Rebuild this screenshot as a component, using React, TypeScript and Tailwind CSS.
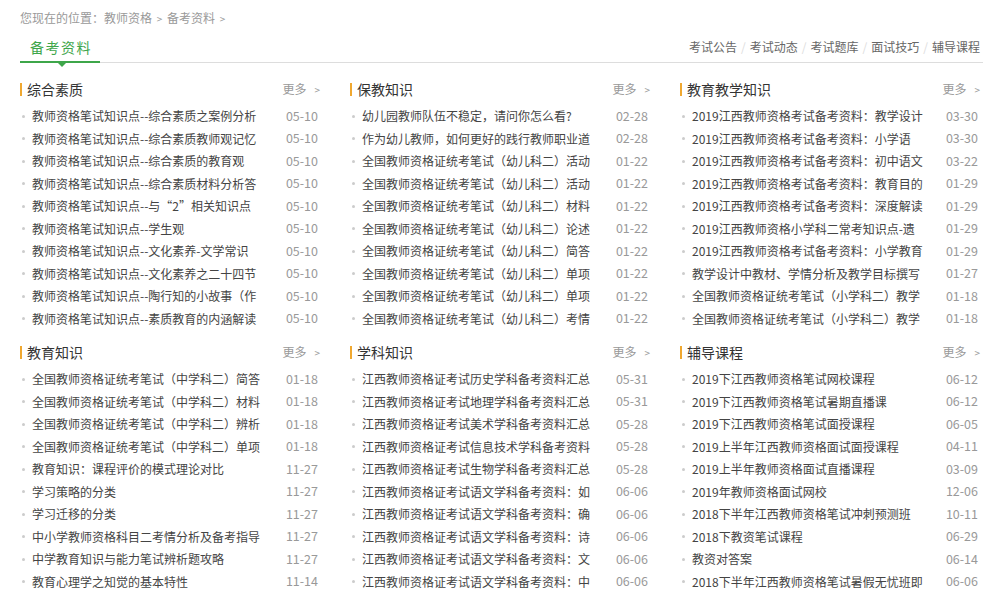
type Item = [string, string]

interface Section {
  title: string
  items: Item[]
}

const sections: Section[] = [
  {
    title: '综合素质',
    items: [
      ['教师资格笔试知识点--综合素质之案例分析', '05-10'],
      ['教师资格笔试知识点--综合素质教师观记忆', '05-10'],
      ['教师资格笔试知识点--综合素质的教育观', '05-10'],
      ['教师资格笔试知识点--综合素质材料分析答', '05-10'],
      ['教师资格笔试知识点--与“2”相关知识点', '05-10'],
      ['教师资格笔试知识点--学生观', '05-10'],
      ['教师资格笔试知识点--文化素养-文学常识', '05-10'],
      ['教师资格笔试知识点--文化素养之二十四节', '05-10'],
      ['教师资格笔试知识点--陶行知的小故事（作', '05-10'],
      ['教师资格笔试知识点--素质教育的内涵解读', '05-10'],
    ],
  },
  {
    title: '保教知识',
    items: [
      ['幼儿园教师队伍不稳定，请问你怎么看?', '02-28'],
      ['作为幼儿教师，如何更好的践行教师职业道', '02-28'],
      ['全国教师资格证统考笔试（幼儿科二）活动', '01-22'],
      ['全国教师资格证统考笔试（幼儿科二）活动', '01-22'],
      ['全国教师资格证统考笔试（幼儿科二）材料', '01-22'],
      ['全国教师资格证统考笔试（幼儿科二）论述', '01-22'],
      ['全国教师资格证统考笔试（幼儿科二）简答', '01-22'],
      ['全国教师资格证统考笔试（幼儿科二）单项', '01-22'],
      ['全国教师资格证统考笔试（幼儿科二）单项', '01-22'],
      ['全国教师资格证统考笔试（幼儿科二）考情', '01-22'],
    ],
  },
  {
    title: '教育教学知识',
    items: [
      ['2019江西教师资格考试备考资料：教学设计', '03-30'],
      ['2019江西教师资格考试备考资料：小学语', '03-30'],
      ['2019江西教师资格考试备考资料：初中语文', '03-22'],
      ['2019江西教师资格考试备考资料：教育目的', '01-29'],
      ['2019江西教师资格考试备考资料：深度解读', '01-29'],
      ['2019江西教师资格小学科二常考知识点-遗', '01-29'],
      ['2019江西教师资格考试备考资料：小学教育', '01-29'],
      ['教学设计中教材、学情分析及教学目标撰写', '01-27'],
      ['全国教师资格证统考笔试（小学科二）教学', '01-18'],
      ['全国教师资格证统考笔试（小学科二）教学', '01-18'],
    ],
  },
  {
    title: '教育知识',
    items: [
      ['全国教师资格证统考笔试（中学科二）简答', '01-18'],
      ['全国教师资格证统考笔试（中学科二）材料', '01-18'],
      ['全国教师资格证统考笔试（中学科二）辨析', '01-18'],
      ['全国教师资格证统考笔试（中学科二）单项', '01-18'],
      ['教育知识：课程评价的模式理论对比', '11-27'],
      ['学习策略的分类', '11-27'],
      ['学习迁移的分类', '11-27'],
      ['中小学教师资格科目二考情分析及备考指导', '11-27'],
      ['中学教育知识与能力笔试辨析题攻略', '11-27'],
      ['教育心理学之知觉的基本特性', '11-14'],
    ],
  },
  {
    title: '学科知识',
    items: [
      ['江西教师资格证考试历史学科备考资料汇总', '05-31'],
      ['江西教师资格证考试地理学科备考资料汇总', '05-31'],
      ['江西教师资格证考试美术学科备考资料汇总', '05-28'],
      ['江西教师资格证考试信息技术学科备考资料', '05-28'],
      ['江西教师资格证考试生物学科备考资料汇总', '05-28'],
      ['江西教师资格证考试语文学科备考资料：如', '06-06'],
      ['江西教师资格证考试语文学科备考资料：确', '06-06'],
      ['江西教师资格证考试语文学科备考资料：诗', '06-06'],
      ['江西教师资格证考试语文学科备考资料：文', '06-06'],
      ['江西教师资格证考试语文学科备考资料：中', '06-06'],
    ],
  },
  {
    title: '辅导课程',
    items: [
      ['2019下江西教师资格笔试网校课程', '06-12'],
      ['2019下江西教师资格笔试暑期直播课', '06-12'],
      ['2019下江西教师资格笔试面授课程', '06-05'],
      ['2019上半年江西教师资格面试面授课程', '04-11'],
      ['2019上半年教师资格面试直播课程', '03-09'],
      ['2019年教师资格面试网校', '12-06'],
      ['2018下半年江西教师资格笔试冲刺预测班', '10-11'],
      ['2018下教资笔试课程', '06-29'],
      ['教资对答案', '06-14'],
      ['2018下半年江西教师资格笔试暑假无忧班即', '06-06'],
    ],
  },
]

const navLinks = ['考试公告', '考试动态', '考试题库', '面试技巧', '辅导课程']

function SectionBlock({ section }: { section: Section }) {
  return (
    <div className="w-[300px]">
      {/* header */}
      <div className="flex items-center h-[22px]">
        <span className="w-[2px] h-[13px] bg-[#f0a830] mr-[5px]" />
        <span className="text-[14px] text-[#333]">{section.title}</span>
        <span className="ml-auto text-[12px] text-[#999]">
          更多<span className="ml-[8px] text-[10px]">&gt;</span>
        </span>
      </div>
      <ul className="mt-[5px]">
        {section.items.map(([text, date], i) => (
          <li key={i} className="flex items-center h-[22.5px] text-[12px]">
            <span className="w-[3px] h-[3px] rounded-full bg-[#ccc] ml-[2px] mr-[7px] shrink-0" />
            <span className="whitespace-nowrap text-[#444]">{text}</span>
            <span className="ml-auto mr-[2px] text-[12.5px] text-[#999]">{date}</span>
          </li>
        ))}
      </ul>
    </div>
  )
}

export default function App() {
  return (
    <div
      className="w-[1005px] h-[609px] bg-white px-[20px] pt-[10px] overflow-hidden"
      style={{ fontFamily: '"Noto Sans CJK SC", "Noto Sans", sans-serif' }}
    >
      {/* breadcrumb */}
      <div className="h-[16px] leading-[16px] text-[12px] text-[#999]">
        您现在的位置：教师资格 <span className="text-[10px] mx-[2px]">&gt;</span> 备考资料{' '}
        <span className="text-[10px] mx-[2px]">&gt;</span>
      </div>

      {/* tab bar */}
      <div className="relative mt-[6px] h-[31px] w-[963px] border-b border-[#ddd] flex items-center">
        <span className="ml-[10px] text-[14px] tracking-[1.5px] text-[#3ea64a]">备考资料</span>
        <div className="absolute left-0 bottom-[-1px] w-[80px] h-[2px] bg-[#3ea64a]" />
        <div className="absolute left-[38px] bottom-[-5px] w-0 h-0 border-l-[4px] border-r-[4px] border-t-[4px] border-l-transparent border-r-transparent border-t-[#3ea64a]" />
        <div className="ml-auto mr-[3px] flex items-center text-[12px] text-[#666]">
          {navLinks.map((l, i) => (
            <span key={l} className="flex items-center">
              {i > 0 && <span className="mx-[4px] text-[#ddd]">/</span>}
              {l}
            </span>
          ))}
        </div>
      </div>

      {/* sections */}
      <div className="mt-[15px] grid grid-cols-[300px_300px_300px] gap-x-[30px] gap-y-[11px]">
        {sections.map(s => (
          <SectionBlock key={s.title} section={s} />
        ))}
      </div>
    </div>
  )
}
